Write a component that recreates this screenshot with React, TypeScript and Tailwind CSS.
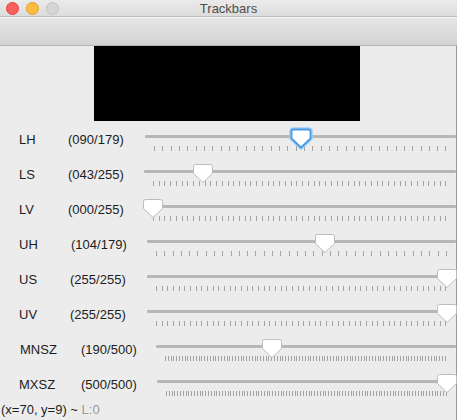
const rows = [
  { name: "LH", value: 90, max: 179, nameW: "w-[49px]", valW: "w-[77px]", focused: true },
  { name: "LS", value: 43, max: 255, nameW: "w-[49px]", valW: "w-[76px]" },
  { name: "LV", value: 0, max: 255, nameW: "w-[49px]", valW: "w-[76px]" },
  { name: "UH", value: 104, max: 179, nameW: "w-[52px]", valW: "w-[76px]" },
  { name: "US", value: 255, max: 255, nameW: "w-[51px]", valW: "w-[77px]" },
  { name: "UV", value: 255, max: 255, nameW: "w-[51px]", valW: "w-[77px]" },
  { name: "MNSZ", value: 190, max: 500, nameW: "w-[62px]", valW: "w-[75px]", pad: true },
  { name: "MXSZ", value: 500, max: 500, nameW: "w-[62px]", valW: "w-[76px]" },
];

const pad3 = (n: number) => String(n).padStart(3, "0");

function Thumb({ focused }: { focused?: boolean }) {
  return (
    <svg width="24" height="23" viewBox="0 0 24 23">
      {focused && (
        <path
          d="M4.5 2 H19.5 Q22 2 22 4.5 V11.5 L12 21 L2 11.5 V4.5 Q2 2 4.5 2 Z"
          fill="none"
          stroke="#a3cdf2"
          strokeWidth="3.5"
          strokeLinejoin="round"
        />
      )}
      <path
        d="M4.5 2.5 H19.5 Q21.5 2.5 21.5 4.5 V11.5 L12 20.5 L2.5 11.5 V4.5 Q2.5 2.5 4.5 2.5 Z"
        fill="#ffffff"
        stroke={focused ? "#4a9be6" : "#bdbdbd"}
        strokeWidth={focused ? 1.8 : 1}
        strokeLinejoin="round"
      />
    </svg>
  );
}

function Slider({ value, max, focused }: { value: number; max: number; focused?: boolean }) {
  const ticks = Math.floor(max / 5) + 1;
  const pct = (value / max) * 100;
  return (
    <div className="relative flex-1 h-[35px]">
      <div className="absolute left-0 right-0 top-[10px] h-[3px] bg-[#b7b7b7] rounded-[1px]" />
      <div className="absolute left-[9px] right-[9px] top-[21px] h-[5px] flex justify-between">
        {Array.from({ length: ticks }).map((_, i) => (
          <div key={i} className="w-px h-full bg-[#a3a3a3]" />
        ))}
      </div>
      <div className="absolute left-[9px] right-[9px] top-[2px] h-[23px]">
        <div className="absolute -translate-x-1/2" style={{ left: `${pct}%` }}>
          <Thumb focused={focused} />
        </div>
      </div>
    </div>
  );
}

export default function App() {
  return (
    <div
      className="w-[457px] h-[420px] overflow-hidden bg-[#ececec] flex flex-col"
      style={{ fontFamily: '"Liberation Sans", Arial, sans-serif' }}
    >
      {/* title bar */}
      <div className="relative h-[17px] bg-gradient-to-b from-[#ebebeb] to-[#dcdcdc] border-b border-[#bcbcbc] flex items-center">
        <div className="flex gap-[7px] pl-[6px]">
          <div className="w-[13px] h-[13px] rounded-full bg-[#fc605c] border border-[#e0443e]" />
          <div className="w-[13px] h-[13px] rounded-full bg-[#fdbc40] border border-[#dea123]" />
          <div className="w-[13px] h-[13px] rounded-full bg-[#d5d5d5] border border-[#c2c2c2]" />
        </div>
        <div className="absolute inset-0 flex items-center justify-center text-[13px] text-[#4d4d4d] leading-none">
          Trackbars
        </div>
      </div>

      {/* toolbar */}
      <div className="h-[29px] bg-gradient-to-b from-[#e6e6e6] to-[#d2d2d2] border-t border-[#f4f4f4] border-b border-b-[#b4b4b4]" />

      <div className="flex-1 flex flex-col border-r border-[#9a9a9a]">
        <div className="ml-[94px] w-[266px] h-[75px] bg-black" />

        <div className="mt-[4px] flex flex-col">
          {rows.map((r) => (
            <div key={r.name} className="flex items-start h-[35px] pl-[19px]">
              <span className={`${r.nameW} mt-[7px] text-[13px] leading-[15px] text-[#1c1c1c] ${r.pad ? "pl-[1px]" : ""}`}>
                {r.name}
              </span>
              <span className={`${r.valW} mt-[7px] text-[13px] leading-[15px] text-[#1c1c1c]`}>
                ({pad3(r.value)}/{pad3(r.max)})
              </span>
              <Slider value={r.value} max={r.max} focused={r.focused} />
            </div>
          ))}
        </div>

        <div className="-mt-[3px] pl-[1px] text-[13px] leading-[15px] text-[#1c1c1c]">
          (x=70, y=9) ~ <span className="text-[#9a9a9a]">L:0</span>
        </div>
      </div>
    </div>
  );
}
